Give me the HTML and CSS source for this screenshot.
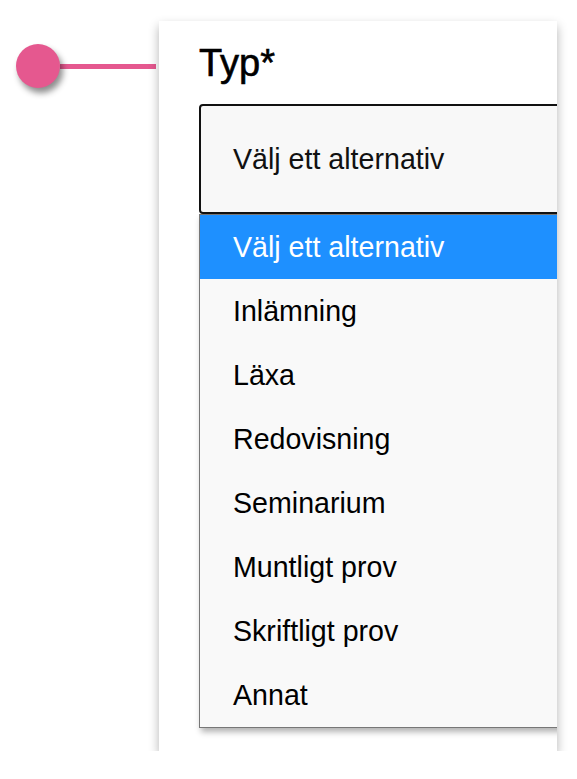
FILE: index.html
```html
<!DOCTYPE html>
<html lang="sv">

<head>
  <meta charset="UTF-8">
  <meta name="viewport" content="width=device-width, initial-scale=1.0">
  <title>Typ</title>
  <link rel="stylesheet" href="styles.css">
</head>

<body>
  <div class="step">
    <div class="marker">
      <span class="dot"></span><span class="line"></span>
    </div>

    <div class="card">
      <h2 class="label">Typ*</h2>
      <div class="select">Välj ett alternativ</div>
      <ul class="options">
        <li class="active">Välj ett alternativ</li>
        <li>Inlämning</li>
        <li>Läxa</li>
        <li>Redovisning</li>
        <li>Seminarium</li>
        <li>Muntligt prov</li>
        <li>Skriftligt prov</li>
        <li>Annat</li>
      </ul>
    </div>
  </div>
</body>

</html>
```

FILE: styles.css
```css
body {
  margin: 0;
  background: #fff;
  font-family: 'Liberation Sans', Arial, sans-serif;
  color: #111;
}

.step {
  display: flex;
  align-items: flex-start;
  padding-left: 16px;
}

/* point + trait vers la carte */
.marker {
  display: flex;
  align-items: center;
  margin-top: 44px;
  height: 44px;
}

.dot {
  width: 44px;
  height: 44px;
  border-radius: 50%;
  background: #e5588f;
  box-shadow: 3px 5px 6px rgba(0, 0, 0, 0.45);
  position: relative;
  z-index: 1;
}

.line {
  width: 96px;
  height: 5px;
  background: #e5588f;
}

.card {
  margin: 21px 0 0 3px;
  width: 398px;
  padding: 22px 0 23px 40px;
  box-sizing: border-box;
  background: #fff;
  box-shadow: 0 5px 10px rgba(0, 0, 0, 0.3);
  overflow: hidden;
}

.label {
  margin: 0 0 20px;
  font-size: 38px;
  font-weight: normal;
  line-height: 41px;
  color: #000;
  -webkit-text-stroke: 0.6px #000;
}

.select {
  display: flex;
  align-items: center;
  width: 420px;
  height: 110px;
  box-sizing: border-box;
  padding-left: 32px;
  border: 2px solid #111;
  border-radius: 4px;
  background: #f8f8f8;
  font-size: 28.6px;
}

.options {
  list-style: none;
  margin: 0;
  padding: 0;
  width: 420px;
  border: 1px solid #777;
  background: #f9f9f9;
  box-shadow: 2px 4px 6px rgba(0, 0, 0, 0.3);
}

.options li {
  display: flex;
  align-items: center;
  height: 64px;
  padding-left: 33px;
  font-size: 28.6px;
  color: #000;
}

.options li.active {
  background: #1e90ff;
  color: #fff;
}
```
